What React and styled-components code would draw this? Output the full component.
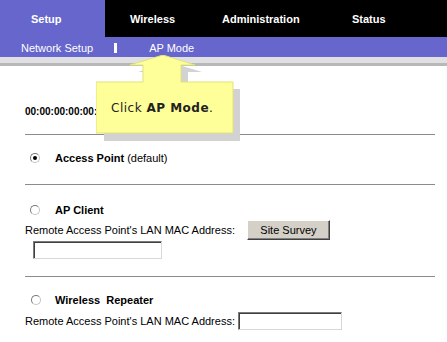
import React from 'react';
import styled, { createGlobalStyle } from 'styled-components';

const GlobalStyle = createGlobalStyle`
  html, body {
    margin: 0;
    padding: 0;
    background: #ffffff;
    font-family: "Liberation Sans", Arial, sans-serif;
    font-size: 11px;
    color: #000;
  }
`

const Page = styled.div`
  position: relative;
  width: 447px;
  height: 342px;
  overflow: hidden;
  background: #fff;
`

const TopNav = styled.div`
  display: flex;
  height: 37px;
  background: #000;
`

const Tab = styled.div`
  width: ${p => p.w}px;
  padding-left: ${p => p.pad}px;
  box-sizing: border-box;
  display: flex;
  align-items: center;
  padding-top: 1px;
  background: ${p => (p.active ? '#6666cc' : '#000')};
  color: #fff;
  font-weight: bold;
  font-size: 11px;
`

const SubNav = styled.div`
  display: flex;
  align-items: center;
  height: 20px;
  box-sizing: border-box;
  padding-top: 2px;
  background: #6666cc;
  color: #fff;
  font-size: 11px;
  padding-left: 21px;
`

const SubLink = styled.span`
  margin-right: ${p => p.mr || 0}px;
`

const Divider = styled.span`
  width: 3px;
  height: 10px;
  background: #fff;
  margin-right: 32px;
`

const Band = styled.div`
  height: 6px;
  background: #e0dfe2;
  border-bottom: 3px solid #b8b8b8;
`

const Content = styled.div`
  padding: 0 12px 0 25px;
`

const MacRow = styled.div`
  height: 68px;
  box-sizing: border-box;
  display: flex;
  align-items: flex-end;
  padding-bottom: 17px;
  font-weight: bold;
  font-size: 10px;
`

const Rule = styled.hr`
  border: 0;
  border-top: 1px solid #8c8c8c;
  margin: 0;
`

const Section = styled.div`
  display: flex;
  flex-direction: column;
  padding: ${p => p.pad || '0'};
  height: ${p => p.h}px;
  box-sizing: border-box;
`

const OptionRow = styled.div`
  display: flex;
  align-items: center;
  height: 16px;
  font-size: 11px;
`

const Radio = styled.span`
  position: relative;
  width: 10px;
  height: 10px;
  border-radius: 50%;
  box-sizing: border-box;
  border: 1px solid #c4c4c4;
  border-top-color: #7a7a7a;
  border-left-color: #7a7a7a;
  background: #fff;
  margin-left: ${p => p.ml || 5}px;
  margin-right: ${p => p.mr || 15}px;

  &::after {
    content: '';
    display: ${p => (p.checked ? 'block' : 'none')};
    position: absolute;
    left: 2px;
    top: 2px;
    width: 4px;
    height: 4px;
    border-radius: 50%;
    background: #000;
  }
`

const Bold = styled.b`
  font-weight: bold;
  white-space: pre;
`

const FieldRow = styled.div`
  display: flex;
  align-items: center;
  height: ${p => p.h || 22}px;
  margin-top: ${p => p.mt || 0}px;
`

const Label = styled.span`
  font-size: 11px;
  margin-right: ${p => p.mr || 0}px;
`

const Button = styled.button`
  width: 83px;
  height: 20px;
  padding: 0;
  background: #d4d0c8;
  border: 1px solid;
  border-color: #ffffff #404040 #404040 #ffffff;
  box-shadow: inset -1px -1px 0 #808080;
  font-family: "Liberation Sans", Arial, sans-serif;
  font-size: 11px;
  color: #000;
`

const TextInput = styled.input`
  width: ${p => p.w}px;
  height: 18px;
  box-sizing: border-box;
  margin-left: ${p => p.ml || 0}px;
  border: 1px solid;
  border-color: #7a7a7a #d8d8d8 #d8d8d8 #7a7a7a;
  box-shadow: inset 1px 1px 0 #404040;
  background: #fff;
`

const Callout = styled.div`
  position: absolute;
  left: 96px;
  top: 55px;
  width: 146px;
  height: 86px;
`

const CalloutText = styled.div`
  position: absolute;
  left: 15px;
  top: 46px;
  font-family: "DejaVu Sans", Verdana, sans-serif;
  font-size: 12px;
  letter-spacing: 0.5px;
  color: #222;
  white-space: pre;
`

const Tooltip = () => (
  <Callout>
    <svg width="146" height="86" viewBox="0 0 146 86">
      <path
        d="M73 7 L106 17 L92 17 L92 34 L144 34 L144 86 L8 86 L8 34 L55 34 L55 17 L42 17 Z"
        fill="#d2d2d2"
      />
      <path
        d="M67 0 L99 10 L85 10 L85 27 L137 27 L137 78 L0 78 L0 27 L47 27 L47 10 L34 10 Z"
        fill="#ffff99"
        stroke="#e2e27a"
        strokeWidth="1"
      />
    </svg>
    <CalloutText>
      Click <Bold>AP Mode</Bold>.
    </CalloutText>
  </Callout>
)

export default function App() {
  return (
    <Page>
      <GlobalStyle />
      <TopNav>
        <Tab active w={105} pad={31}>Setup</Tab>
        <Tab w={92} pad={25}>Wireless</Tab>
        <Tab w={130} pad={25}>Administration</Tab>
        <Tab w={120} pad={25}>Status</Tab>
      </TopNav>
      <SubNav>
        <SubLink mr={21}>Network Setup</SubLink>
        <Divider />
        <SubLink>AP Mode</SubLink>
      </SubNav>
      <Band />
      <Content>
        <MacRow>00:00:00:00:00:00</MacRow>
        <Rule />
        <Section h={49} pad="15px 0 0 0">
          <OptionRow>
            <Radio checked />
            <Bold>Access Point</Bold>&nbsp;(default)
          </OptionRow>
        </Section>
        <Rule />
        <Section h={91} pad="17px 0 0 0">
          <OptionRow>
            <Radio />
            <Bold>AP Client</Bold>
          </OptionRow>
          <FieldRow mt={1}>
            <Label mr={12}>Remote Access Point's LAN MAC Address:</Label>
            <Button>Site Survey</Button>
          </FieldRow>
          <FieldRow h={18} mt={0}>
            <TextInput w={129} ml={8} />
          </FieldRow>
        </Section>
        <Rule />
        <Section h={60} pad="15px 0 0 0">
          <OptionRow>
            <Radio ml={6} mr={14} />
            <Bold>Wireless  Repeater</Bold>
          </OptionRow>
          <FieldRow mt={2}>
            <Label mr={3}>Remote Access Point's LAN MAC Address:</Label>
            <TextInput w={104} />
          </FieldRow>
        </Section>
      </Content>
      <Tooltip />
    </Page>
  )
}
